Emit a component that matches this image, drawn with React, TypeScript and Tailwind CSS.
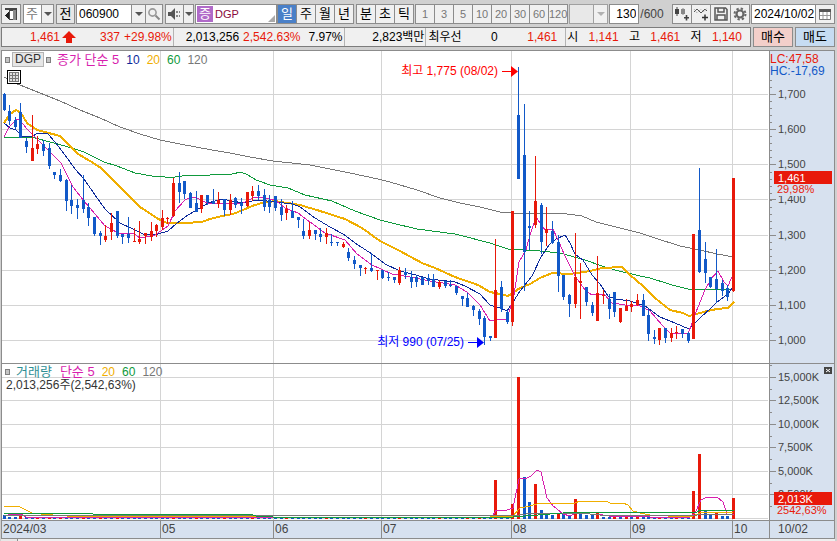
import type { ReactNode } from 'react';
import clsx from 'clsx';

type Candle = [dir: 'u' | 'd', high: number, top: number, bottom: number, low: number];

// 'u' = up (red), 'd' = down (blue), values are y positions on the price pane
const candles: Candle[] = [
  ['d', 93, 94, 110, 111], ['d', 105, 111, 121, 125], ['d', 117, 120, 127, 129], ['d', 103, 112, 138, 138],
  ['d', 138, 141, 147, 153], ['u', 115, 148, 161, 161], ['u', 136, 144, 149, 154], ['d', 140, 144, 151, 156],
  ['d', 143, 148, 166, 169], ['d', 172, 172, 175, 179], ['d', 169, 175, 181, 182], ['d', 179, 180, 201, 211],
  ['d', 185, 200, 206, 214], ['d', 199, 205, 208, 219], ['d', 175, 200, 209, 213], ['d', 203, 207, 218, 226],
  ['d', 217, 217, 234, 236], ['d', 231, 233, 236, 245], ['u', 225, 236, 240, 242], ['u', 213, 223, 232, 240],
  ['d', 211, 211, 236, 238], ['d', 234, 234, 237, 244], ['d', 217, 234, 238, 243], ['u', 228, 241, 242, 242],
  ['u', 221, 239, 242, 244], ['u', 233, 233, 236, 244], ['u', 222, 231, 237, 241], ['u', 224, 225, 231, 237],
  ['u', 210, 218, 227, 230], ['u', 217, 218, 219, 224], ['u', 178, 183, 216, 217], ['d', 172, 183, 192, 203],
  ['d', 181, 181, 194, 199], ['d', 192, 193, 208, 208], ['d', 191, 203, 212, 212], ['u', 195, 195, 209, 213],
  ['d', 195, 195, 202, 205], ['d', 189, 201, 204, 204], ['u', 192, 200, 204, 208], ['d', 199, 199, 210, 216],
  ['u', 194, 200, 210, 215], ['d', 197, 198, 205, 208], ['d', 198, 203, 206, 214], ['u', 192, 192, 206, 207],
  ['u', 186, 191, 196, 201], ['d', 185, 191, 196, 200], ['d', 189, 195, 207, 211], ['d', 195, 200, 207, 213],
  ['d', 196, 196, 208, 211], ['d', 199, 207, 215, 221], ['u', 205, 209, 213, 220], ['d', 201, 211, 218, 218],
  ['d', 217, 217, 220, 228], ['d', 219, 231, 236, 239], ['u', 222, 230, 236, 239], ['d', 230, 230, 234, 240],
  ['d', 228, 234, 237, 242], ['u', 228, 233, 237, 244], ['d', 234, 242, 243, 246], ['d', 242, 242, 243, 246],
  ['u', 242, 244, 247, 248], ['d', 248, 252, 258, 261], ['d', 256, 260, 264, 269], ['d', 265, 265, 268, 276],
  ['u', 267, 268, 269, 274], ['d', 253, 268, 271, 272], ['u', 270, 270, 271, 280], ['d', 270, 270, 278, 279],
  ['d', 272, 277, 278, 281], ['d', 277, 277, 280, 283], ['u', 267, 270, 283, 285], ['d', 268, 272, 275, 279],
  ['d', 271, 277, 282, 288], ['d', 275, 277, 282, 287], ['d', 277, 277, 285, 285], ['d', 274, 278, 281, 285],
  ['d', 274, 279, 287, 287], ['u', 280, 282, 287, 289], ['d', 281, 281, 286, 288], ['d', 280, 285, 286, 287],
  ['d', 286, 286, 293, 295], ['d', 296, 296, 299, 306], ['d', 293, 298, 307, 307], ['d', 305, 306, 310, 316],
  ['d', 309, 311, 319, 325], ['d', 316, 318, 337, 345], ['d', 336, 336, 338, 341], ['u', 239, 290, 338, 338],
  ['d', 281, 287, 309, 312], ['d', 310, 312, 322, 324], ['u', 211, 211, 322, 326], ['d', 67, 115, 179, 179],
  ['d', 104, 155, 252, 291], ['d', 211, 226, 228, 250], ['u', 156, 201, 225, 228], ['d', 203, 205, 242, 254],
  ['u', 207, 229, 233, 246], ['d', 221, 231, 243, 244], ['d', 235, 242, 276, 292], ['d', 275, 275, 297, 300],
  ['d', 294, 295, 304, 317], ['u', 233, 277, 304, 308], ['u', 263, 281, 283, 319], ['d', 287, 287, 302, 306],
  ['d', 302, 305, 313, 316], ['u', 256, 293, 321, 321], ['u', 290, 295, 296, 304], ['d', 294, 299, 309, 319],
  ['d', 292, 292, 312, 317], ['u', 308, 308, 322, 323], ['u', 299, 306, 311, 311], ['u', 301, 304, 307, 312],
  ['u', 294, 300, 305, 306], ['d', 294, 300, 316, 316], ['d', 309, 315, 334, 341], ['d', 330, 337, 339, 344],
  ['u', 328, 328, 340, 345], ['d', 328, 328, 338, 343], ['u', 328, 333, 338, 342], ['u', 326, 332, 333, 339],
  ['d', 329, 329, 334, 338], ['d', 332, 333, 341, 343], ['u', 234, 234, 339, 339], ['d', 168, 230, 272, 273],
  ['d', 242, 259, 273, 283], ['d', 277, 277, 287, 288], ['d', 249, 279, 289, 303], ['d', 280, 283, 291, 296],
  ['d', 285, 288, 297, 301], ['u', 178, 178, 291, 292],
];

// bar heights that stand out, every other day is a 1px stub
const volumes: Record<number, number> = {
  0: 3, 3: 2, 30: 3, 87: 38, 90: 14, 91: 141, 92: 41, 93: 16, 94: 34, 95: 8, 96: 5, 97: 3, 98: 5, 99: 4, 100: 3,
  101: 19, 102: 6, 103: 3, 104: 3, 105: 6, 122: 27, 123: 64, 124: 8, 125: 3, 126: 6, 127: 2, 128: 2, 129: 20,
};
const volumeUp = [3, 6, 8, 10, 14, 17, 20, 30, 34, 39, 44, 50, 57, 64, 70, 77, 82, 84, 87, 90, 91, 94, 98, 101, 105, 108, 110, 112, 116, 119, 122, 123, 126, 129];

const priceLines = [
  { color: '#777777', width: 1, points: '4,77 15,83 40,93 60,101 80,110 100,118 120,127 140,134 160,140 180,144 212,150 230,153 250,157 273,161 310,165 350,173 378,179 390,182 417,190 440,198 460,203 480,207 500,212 513,213 560,213 582,216 596,222 620,228 640,233 655,238 680,246 700,250 717,254 734,257' },
  { color: '#0f9a3c', width: 1, points: '4,137 35,138 50,142 65,146 84,152 104,162 117,166 135,173 152,176 165,177 175,177 190,175 210,175 232,174 241,172 248,175 256,180 270,185 288,188 305,195 332,201 355,211 380,220 392,223 417,229 455,234 490,243 508,249 540,251 560,253 585,260 602,266 615,270 640,276 650,278 672,285 688,289 734,289' },
  { color: '#f0ae00', width: 2, points: '4,123 10,114 16,110 21,113 27,123 37,130 45,132 60,136 78,154 90,161 101,168 120,187 140,207 160,220 167,223 185,223 202,222 210,219 222,216 233,214 243,210 252,206 262,203 275,201 300,205 320,211 345,219 362,228 380,241 400,251 422,263 435,268 455,277 478,285 490,292 500,294 508,296 520,288 530,284 540,278 552,273 570,274 590,271 602,268 622,267 630,275 643,286 655,298 670,310 683,313 689,316 700,313 707,311 717,309 728,308 734,302' },
  { color: '#0d2a9a', width: 1, points: '4,123 10,128 16,130 22,136 32,137 37,133 48,134 55,142 65,155 75,169 84,179 95,195 105,209 120,223 135,230 145,235 158,234 168,231 176,224 185,217 200,208 208,203 222,199 232,201 243,203 252,201 258,200 275,202 293,204 300,207 315,218 330,227 343,234 358,245 372,254 385,264 400,271 412,274 430,279 455,282 465,286 480,294 490,305 500,308 507,311 515,299 520,291 532,276 541,257 549,245 556,239 565,235 570,243 575,254 583,260 592,275 600,284 608,296 615,299 630,301 645,306 660,317 675,323 689,329 700,318 712,307 717,302 728,294 734,285' },
  { color: '#d81fae', width: 1, points: '4,137 9,127 16,120 19,119 27,129 37,139 49,151 61,163 73,187 84,201 95,214 105,226 120,234 133,233 140,238 155,235 168,226 175,211 185,200 192,197 197,198 207,203 243,203 253,198 260,197 275,200 285,208 298,213 310,222 325,233 345,240 357,254 372,265 392,274 410,277 430,281 455,285 467,292 480,305 490,321 498,319 507,319 514,295 519,262 526,250 530,235 536,217 545,230 553,229 558,240 565,256 575,276 585,290 592,295 604,294 612,303 625,305 640,306 650,311 662,325 670,333 688,334 696,312 705,290 711,279 718,271 724,282 728,286 734,272' },
];

const volumeLines = [
  { color: '#d81fae', points: '4,516 13,514 22,514 26,517 492,517 496,510 507,510 513,508 519,479 527,478 531,476 537,470 541,472 547,498 553,506 557,509 563,514 570,516 577,512 585,512 590,514 603,515 608,516 650,517 690,517 695,513 701,500 705,498 717,497 723,502 727,514 734,514' },
  { color: '#f0ae00', points: '4,506 18,506 22,508 32,513 41,514 64,516 273,517 490,517 513,516 520,508 530,506 540,503 575,503 580,501 606,501 610,503 623,503 628,505 633,511 640,513 650,515 668,516 693,516 700,513 734,512' },
  { color: '#777777', points: '4,515 273,515 490,516 519,515 534,513 580,513 600,515 697,515 734,514' },
  { color: '#0f9a3c', points: '4,513 92,513 93,514 250,514 256,516 273,517 490,517 513,517 575,512 697,512 700,510 734,510' },
];

const priceTicks = [
  ['1,700', 94], ['1,600', 129], ['1,500', 164], ['1,400', 199], ['1,300', 235], ['1,200', 270], ['1,100', 305], ['1,000', 340],
] as const;

const volumeTicks = [
  ['15,000K', 377], ['12,500K', 400], ['10,000K', 424], ['7,500K', 447], ['5,000K', 471], ['2,500K', 494],
] as const;

const months = [
  { label: '2024/03', width: 158 },
  { label: '05', width: 113 },
  { label: '06', width: 108 },
  { label: '07', width: 130 },
  { label: '08', width: 119 },
  { label: '09', width: 102 },
  { label: '10', width: 37 },
];

const monthLines = [160, 273, 381, 511, 630, 732];
const PLOT_LEFT = 2;
const PLOT_WIDTH = 767;
const UP = '#e8190a';
const DOWN = '#1259c8';

const candleX = (i: number) => Math.floor(4 + i * 5.655);
const fromRight = (x: number) => `${(1 - (x - PLOT_LEFT) / PLOT_WIDTH) * 100}%`;

const Arrow = ({ muted = false }: { muted?: boolean }) => (
  <svg width="8" height="4" viewBox="0 0 8 4" aria-hidden="true">
    <path d="M0 0h8L4 4z" fill={muted ? '#b0b0b0' : '#555'} />
  </svg>
);

const IconButton = ({ label, className, children }: { label: string; className?: string; children: ReactNode }) => (
  <button
    type="button"
    aria-label={label}
    className={clsx('flex h-5 shrink-0 items-center justify-center border border-[#8c8c8c] bg-[#f0f0f0]', className)}
  >
    {children}
  </button>
);

const ToggleGroup = ({ items, active, muted }: { items: string[]; active?: string; muted?: boolean }) => (
  <div className="flex h-5 shrink-0 gap-px border border-[#8c8c8c] bg-[#8c8c8c]">
    {items.map((item) => (
      <button
        key={item}
        type="button"
        className={clsx(
          'min-w-[18px] text-center',
          item === active ? 'bg-[#4a80c8] text-white' : 'bg-[#f0f0f0]',
          muted ? 'text-[11px] text-[#777]' : 'text-[13px]',
        )}
      >
        {item}
      </button>
    ))}
  </div>
);

const Toolbar = () => (
  <div className="flex h-5 items-center">
    <IconButton label="사이드 열기" className="w-5">
      <svg width="14" height="14" viewBox="0 0 14 14" shapeRendering="crispEdges">
        <path d="M5.500 3.500h6v9h-6z" fill="#fff" stroke="#444" />
        <path d="M9 3h3v10H9z" fill="#8a8a8a" />
        <path d="M1 1h11v2H1zM12 1h1v12h-1z" fill="#444" />
        <path d="M5 5v7L1 8.500z" fill="#222" />
      </svg>
    </IconButton>
    <div className="relative ml-0.5 flex h-5 w-[31px] shrink-0 border border-[#8c8c8c] bg-white">
      <select aria-label="종목 구분" className="w-full appearance-none bg-transparent pl-0.5 text-[13px] text-[#777]">
        <option>주</option>
      </select>
      <span className="pointer-events-none absolute inset-y-0 right-0 flex w-3 items-center justify-center border-l border-[#8c8c8c] bg-[#f0f0f0]">
        <Arrow />
      </span>
    </div>
    <button type="button" className="ml-0.5 h-5 w-[19px] shrink-0 border border-[#8c8c8c] bg-[#e6e6e6] text-[13px]">전</button>
    <input
      aria-label="종목코드"
      defaultValue="060900"
      className="ml-px h-5 w-14 shrink-0 border border-[#8c8c8c] bg-white px-0.5 outline-none"
    />
    <IconButton label="최근 종목" className="-ml-px w-[15px]"><Arrow /></IconButton>
    <IconButton label="종목 검색" className="-ml-px w-[18px]">
      <svg width="14" height="14" viewBox="0 0 14 14" fill="none">
        <circle cx="5.500" cy="5.500" r="3.600" stroke="#999" strokeWidth="1.600" />
        <path d="M8.500 8.500 12.500 12.500" stroke="#888" strokeWidth="2" />
      </svg>
    </IconButton>
    <IconButton label="소리" className="ml-0.5 w-[19px]">
      <svg width="14" height="12" viewBox="0 0 14 12" fill="#555">
        <path d="M0 4h3l4-4v12L3 8H0z" />
        <path d="M8 3h2v2H8zM11 3h1v2h-1zM8 7h2v2H8zM11 7h1v2h-1z" fill="#888" />
      </svg>
    </IconButton>
    <IconButton label="소리 설정" className="-ml-px w-[11px]"><Arrow /></IconButton>
    <div className="relative ml-px flex h-5 w-[82px] shrink-0 items-center border border-[#8c8c8c] bg-white">
      <span className="ml-px flex h-4 w-4 items-center justify-center bg-[#b06ac8] text-[13px] text-white">증</span>
      <span className="ml-0.5 text-[11px] text-[#8a0a3c]">DGP</span>
      <svg className="absolute right-0 bottom-0" width="8" height="8" viewBox="0 0 8 8">
        <path d="M7 0v7H0z" fill="#aaa" />
      </svg>
    </div>
    <ToggleGroup items={['일', '주', '월', '년']} active="일" />
    <div className="w-0.5 shrink-0" />
    <ToggleGroup items={['분', '초', '틱']} />
    <div className="w-px shrink-0" />
    <ToggleGroup items={['1', '3', '5', '10', '20', '30', '60', '120']} muted />
    <div className="relative ml-px h-5 w-[39px] shrink-0 border border-[#a0a0a0] bg-[#e8e8e8]">
      <select aria-label="주기 설정" disabled className="h-full w-full appearance-none" />
      <span className="pointer-events-none absolute inset-y-0 right-0 flex w-3.5 items-center justify-center border-l border-[#a0a0a0] bg-[#f0f0f0]">
        <Arrow muted />
      </span>
    </div>
    <input
      aria-label="표시 봉 수"
      defaultValue="130"
      className="ml-px h-5 w-[30px] shrink-0 border border-[#8c8c8c] bg-white pr-0.5 text-right outline-none"
    />
    <span className="ml-px text-[#444]">/600</span>
    <div className="min-w-2 flex-1" />
    <IconButton label="봉 추가" className="w-5">
      <svg width="16" height="14" viewBox="0 0 16 14" fill="#444">
        <path d="M1 2h4v5H1zM2.500 0h1v9h-1z" />
        <path d="M7 2h4v5H7zM8.500 1h1v7h-1z" fill="#888" />
        <path d="M10 10h5v1.500h-5zM11.700 8h1.600v5.500h-1.600z" />
      </svg>
    </IconButton>
    <IconButton label="지표 추가" className="-ml-px w-5">
      <svg width="16" height="14" viewBox="0 0 16 14" fill="none">
        <path d="M1 5 4 2l4 4 4-4 2 2" stroke="#555" />
        <path d="M1 2l3 4 4-4 3 3 3-4" stroke="#aaa" strokeDasharray="1 1" />
        <path d="M9 10.500h6M12 7.500v6" stroke="#333" strokeWidth="1.500" />
      </svg>
    </IconButton>
    <IconButton label="저장" className="-ml-px w-[21px]">
      <svg width="14" height="14" viewBox="0 0 14 14" fill="none" stroke="#555" strokeWidth="1.500">
        <path d="M1 1h10.500L13 2.500V13H1z" />
        <path d="M4 1v4h6V1M3 13V8h8v5" />
      </svg>
    </IconButton>
    <IconButton label="설정" className="-ml-px w-5">
      <svg width="14" height="14" viewBox="0 0 14 14" fill="none" stroke="#666">
        <circle cx="7" cy="7" r="3.500" strokeWidth="2.200" />
        <circle cx="7" cy="7" r="5.500" strokeWidth="2" strokeDasharray="2.300 2.020" />
      </svg>
    </IconButton>
    <input
      aria-label="조회일"
      defaultValue="2024/10/02"
      className="ml-px h-5 w-[65px] shrink-0 border border-[#8c8c8c] bg-white pl-0.5 outline-none"
    />
    <IconButton label="달력" className="-ml-px w-5">
      <svg width="12" height="12" viewBox="0 0 12 12">
        <path d="M.5 1.500h11v10H.5z" fill="#fff" stroke="#777" />
        <path d="M0 1h12v3H0z" fill="#555" />
        <path d="M4 4v7M8 4v7M1 7.500h10" stroke="#999" />
      </svg>
    </IconButton>
  </div>
);

const QuoteBar = () => (
  <div className="flex h-5 gap-0.5">
    <div className="grid flex-1 grid-cols-[172fr_171fr_82fr_140fr_184fr] border border-[#7c7c7c] bg-[#f0f0f0] whitespace-nowrap">
      <div className="flex items-center justify-end border-r border-[#b4b4b4] pr-px text-[#e8190a]">
        <span>1,461</span>
        <svg className="mr-6 ml-0.5" width="14" height="12" viewBox="0 0 14 12">
          <path d="M7 0l7 7h-4v5H4V7H0z" fill={UP} />
        </svg>
        <span className="mr-1">337</span>
        <span>+29.98%</span>
      </div>
      <div className="flex items-center justify-end border-r border-[#b4b4b4] pr-px">
        <span>2,013,256</span>
        <span className="mr-2 ml-1 text-[#e8190a]">2,542.63%</span>
        <span>7.97%</span>
      </div>
      <div className="flex items-center justify-end border-r border-[#b4b4b4] pr-px">2,823백만</div>
      <div className="flex items-center justify-between border-r border-[#b4b4b4] pr-2 pl-0.5">
        <span>최우선</span>
        <span>0</span>
        <span className="text-[#e8190a]">1,461</span>
      </div>
      <div className="flex items-center justify-between pr-2 pl-px">
        <span>시</span>
        <span className="text-[#e8190a]">1,141</span>
        <span>고</span>
        <span className="text-[#e8190a]">1,461</span>
        <span>저</span>
        <span className="text-[#e8190a]">1,140</span>
      </div>
    </div>
    <button type="button" className="w-10 border border-[#8c8c8c] bg-[#f3cfca] text-[13px]">매수</button>
    <button type="button" className="w-10 border border-[#8c8c8c] bg-[#c6dcf2] text-[13px]">매도</button>
  </div>
);

const Marker = () => <span className="h-[6px] w-[5px] border border-[#808080] bg-[#c4c4c4]" />;

const Callout = ({ text, x, className }: { text: string; x: number; className: string }) => (
  <div className={clsx('absolute flex items-center gap-1 whitespace-nowrap', className)} style={{ right: fromRight(x) }}>
    <span>{text}</span>
    <svg width="16" height="11" viewBox="0 0 16 11" fill="currentColor">
      <path d="M0 5h10v1H0zM9 0l7 5.500L9 11z" />
    </svg>
  </div>
);

const PricePane = () => (
  <div className="flex">
    <div className="relative min-w-0 flex-1 bg-white">
      <svg
        className="block h-[312px] w-full"
        viewBox="2 51 767 312"
        preserveAspectRatio="none"
        shapeRendering="crispEdges"
        role="img"
        aria-label="DGP 일봉 차트"
      >
        {priceTicks.map(([label, y]) => (
          <rect key={label} x="2" y={y} width="766" height="1" fill="#d4d4d4" />
        ))}
        {monthLines.map((x) => (
          <rect key={x} x={x} y="51" width="1" height="312" fill="#d4d4d4" />
        ))}
        {priceLines.map((line) => (
          <polyline key={line.color} points={line.points} fill="none" stroke={line.color} strokeWidth={line.width} />
        ))}
        {candles.map(([dir, high, top, bottom, low], i) => (
          <g key={i} fill={dir === 'u' ? UP : DOWN}>
            <rect x={candleX(i)} y={high} width="1" height={low - high} />
            <rect x={candleX(i) - 1} y={top} width="3" height={bottom - top} />
          </g>
        ))}
      </svg>
      <div className="absolute top-px left-[3px] flex items-center leading-[14px]">
        <Marker />
        <span className="mx-0.5 border border-[#b4b4b4] bg-[#e6e6e6] px-0.5 leading-[13px] text-[#333]">DGP</span>
        <Marker />
        <span className="ml-1.5 text-[13px] text-[#d81fae]">종가 단순 5</span>
        <span className="ml-[7px] text-[#0d2a9a]">10</span>
        <span className="ml-[7px] text-[#f0ae00]">20</span>
        <span className="ml-[7px] text-[#0f9a3c]">60</span>
        <span className="ml-[7px] text-[#777]">120</span>
      </div>
      <button type="button" aria-label="데이터 표" className="absolute top-[19px] left-[5px] border border-black bg-white p-px">
        <svg width="10" height="10" viewBox="0 0 10 10" shapeRendering="crispEdges">
          <path d="M.5.5h9v9h-9zM.5 3.500h9M.5 6.500h9M3.500.5v9M6.500.5v9" fill="#e0e0e0" stroke="#777" />
        </svg>
      </button>
      <Callout text="최고 1,775 (08/02)" x={518} className="top-3 text-[#ff0000]" />
      <Callout text="최저 990 (07/25)" x={484} className="top-[283px] text-[#0000ff]" />
    </div>
    <svg
      className="w-[65px] shrink-0 border-l border-[#8c8c8c] bg-[#d7e1ef] text-[11px]"
      height="312"
      viewBox="770 51 64 312"
      fill="#444"
    >
      {Array.from({ length: 38 }, (_, i) => (
        <rect key={i} x="770" y={Math.round(80 + i * 7.040)} width="2" height="1" fill="#8c8c8c" />
      ))}
      {priceTicks.map(([label, y]) => (
        <g key={label}>
          <rect x="770" y={y} width="6" height="1" fill="#8c8c8c" />
          <text x="778" y={y + 4}>{label}</text>
        </g>
      ))}
      <text x="770" y="63" fill={UP} className="text-[12px]">LC:47,58</text>
      <text x="770" y="75" fill={DOWN} className="text-[12px]">HC:-17,69</text>
      <rect x="776" y="184" width="56" height="12" fill="#d7e1ef" />
      <rect x="774" y="171" width="58" height="13" fill={UP} />
      <text x="778" y="182" fill="#fff">1,461</text>
      <text x="777" y="193" fill={UP}>29,98%</text>
    </svg>
  </div>
);

const VolumePane = () => (
  <div className="flex border-t border-[#8c8c8c]">
    <div className="relative min-w-0 flex-1 bg-white">
      <svg
        className="block h-[156px] w-full"
        viewBox="2 364 767 156"
        preserveAspectRatio="none"
        shapeRendering="crispEdges"
        role="img"
        aria-label="거래량 차트"
      >
        {volumeTicks.map(([label, y]) => (
          <rect key={label} x="2" y={y} width="766" height="1" fill="#d4d4d4" />
        ))}
        <rect x="2" y="518" width="766" height="1" fill="#d4d4d4" />
        {monthLines.map((x) => (
          <rect key={x} x={x} y="364" width="1" height="156" fill="#d4d4d4" />
        ))}
        {candles.map((_, i) => {
          const h = volumes[i] ?? 1;
          return (
            <rect key={i} x={candleX(i) - 1} y={518 - h} width="3" height={h + 1} fill={volumeUp.includes(i) ? UP : DOWN} />
          );
        })}
        {volumeLines.map((line) => (
          <polyline key={line.color} points={line.points} fill="none" stroke={line.color} />
        ))}
      </svg>
      <div className="absolute top-px left-[3px] flex items-center leading-[14px]">
        <Marker />
        <span className="ml-1.5 text-[13px] text-[#2f8f95]">거래량</span>
        <span className="ml-2 text-[13px] text-[#d81fae]">단순 5</span>
        <span className="ml-[7px] text-[#f0ae00]">20</span>
        <span className="ml-[7px] text-[#0f9a3c]">60</span>
        <span className="ml-[7px] text-[#777]">120</span>
      </div>
      <div className="absolute top-3.5 left-1 leading-[14px] text-[#333]">2,013,256주(2,542,63%)</div>
    </div>
    <svg
      className="w-[65px] shrink-0 border-l border-[#8c8c8c] bg-[#d7e1ef] text-[11px]"
      height="156"
      viewBox="770 364 64 156"
      fill="#444"
    >
      {Array.from({ length: 7 }, (_, i) => (
        <rect key={i} x="770" y={Math.round(365 + i * 23.500)} width="2" height="1" fill="#8c8c8c" />
      ))}
      {volumeTicks.map(([label, y]) => (
        <g key={label}>
          <rect x="770" y={y} width="6" height="1" fill="#8c8c8c" />
          <text x="778" y={y + 4}>{label}</text>
        </g>
      ))}
      <rect x="776" y="505" width="56" height="12" fill="#d7e1ef" />
      <rect x="774" y="492" width="58" height="13" fill={UP} />
      <text x="778" y="503" fill="#fff">2,013K</text>
      <text x="777" y="514" fill={UP}>2542,63%</text>
      <rect x="824" y="367" width="8" height="7" fill="#444" />
      <path d="M826 369l4 3M830 369l-4 3" stroke="#fff" />
    </svg>
  </div>
);

const DateAxis = () => (
  <div className="flex h-[18px] border-t border-[#8c8c8c] bg-[#d7e1ef] leading-4 text-[#444]">
    <div className="flex min-w-0 flex-1">
      {months.map((month, i) => (
        <span
          key={month.label}
          className={clsx('shrink-0 pl-px', i > 0 && 'border-l border-[#8c8c8c]')}
          style={{ width: `${(month.width / PLOT_WIDTH) * 100}%` }}
        >
          {month.label}
        </span>
      ))}
    </div>
    <span className="w-[65px] shrink-0 border-l border-[#8c8c8c] pl-2">10/02</span>
  </div>
);

const App = () => {
  return (
    <main className="bg-[#d0d0d0] pt-1 pr-0.5 pl-px font-['Liberation_Sans','Noto_Sans_CJK_KR',sans-serif] text-[12px] leading-4 text-black">
      <Toolbar />
      <div className="mt-[3px]">
        <QuoteBar />
      </div>
      <section className="mt-[3px] border border-[#8c8c8c]">
        <PricePane />
        <VolumePane />
        <DateAxis />
      </section>
      <div className="flex h-0.5 gap-px bg-[#8c8c8c]">
        <div className="w-4 bg-[#e8e8e8]" />
        <div className="flex-1 bg-[#efefef]" />
      </div>
    </main>
  );
};

export default App;
